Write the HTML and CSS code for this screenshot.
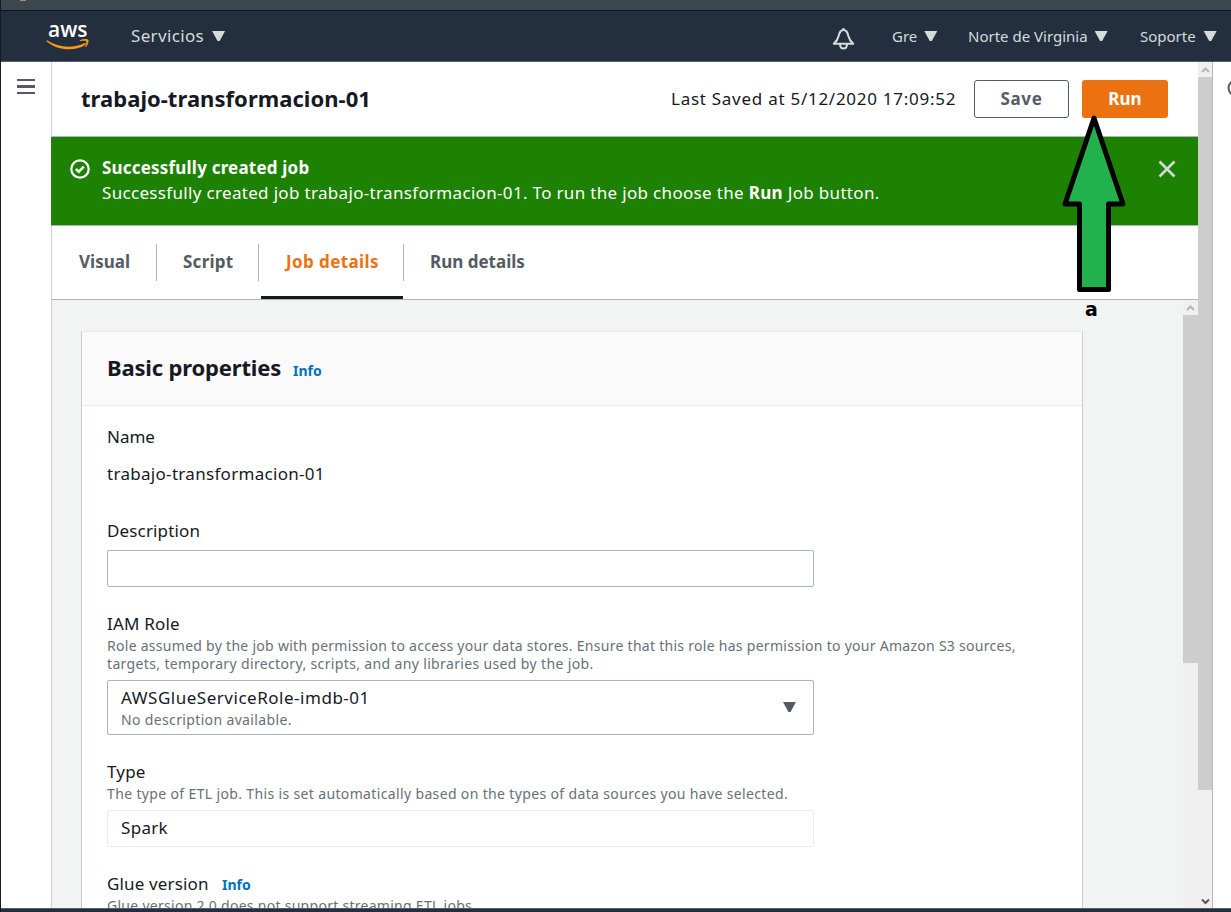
FILE: index.html
```html
<!DOCTYPE html>
<html lang="es">
<head>
<meta charset="utf-8">
<title>trabajo-transformacion-01</title>
<link rel="stylesheet" href="styles.css">
</head>
<body>
<div class="window">
  <div class="browser-strip"><span class="tab-icon"></span></div>
  <nav class="topnav">
    <div class="brand">
      <span class="brand-name">aws</span>
      <svg class="smile" width="44" height="15" viewBox="0 0 44 15"><path d="M1 3.2C12 10.8 27 11.6 38.5 6.2c1.300-.600 2 .700.800 1.700C29 14.300 12 14 1 4.700.300 4 .500 3 1 3.200z" fill="#f79a1e"/><path d="M34 3.300c2.500-1.500 7.500-1.500 8.300-.500.800 1.100-.300 5.500-2.400 7.200-.600.400-.900.100-.600-.500.800-1.800 1.500-4.300 1-5.100-.600-.800-4.100-.600-5.900-.400-.600.100-.800-.400-.400-.700z" fill="#f79a1e"/></svg>
    </div>
    <div class="menu services"><span>Servicios</span><i class="caret"></i></div>
    <svg class="bell" width="23" height="23" viewBox="0 0 23 23" fill="none" stroke="#d5dbdb" stroke-width="2" stroke-linejoin="round"><path d="M1.800 16.800C5.500 13.500 6 12 6.800 8.500C7.500 5 9 3 11.500 3s4 2 4.700 5.500c.8 3.500 1.300 5 5 8.300z"/><path d="M11.500 1v2M8 17c0 6 7 6 7 0"/></svg>
    <div class="menu account"><span>Gre</span><i class="caret"></i></div>
    <div class="menu region"><span>Norte de Virginia</span><i class="caret"></i></div>
    <div class="menu support"><span>Soporte</span><i class="caret"></i></div>
  </nav>
  <div class="workspace">
    <aside class="rail"><span class="bars"><i></i><i></i><i></i></span></aside>
    <main class="main">
      <header class="job-header">
        <h1>trabajo-transformacion-01</h1>
        <span class="saved">Last Saved at 5/12/2020 17:09:52</span>
        <button class="btn save">Save</button>
        <button class="btn run">Run</button>
      </header>
      <section class="flash">
        <svg class="check" width="20" height="20" viewBox="0 0 20 20" fill="none" stroke="#fff" stroke-width="2.200"><circle cx="10" cy="10" r="8.700"/><path d="M5.800 10l3 2.700 5-5" stroke-width="2.500"/></svg>
        <div class="flash-text">
          <strong class="flash-title">Successfully created job</strong>
          <span class="flash-body">Successfully created job trabajo-transformacion-01. To run the job choose the <b>Run</b> Job button.</span>
        </div>
        <svg class="close" width="18" height="18" viewBox="0 0 18 18" stroke="#d5dbdb" stroke-width="2.500"><path d="M1.500 1.500l15 15M16.500 1.500l-15 15"/></svg>
      </section>
      <div class="tabs">
        <span class="tab visual">Visual</span>
        <span class="tab script">Script</span>
        <span class="tab details">Job details</span>
        <span class="tab runs">Run details</span>
      </div>
      <div class="body">
        <div class="canvas">
          <section class="card">
            <div class="card-head"><h2>Basic properties</h2><a class="info">Info</a></div>
            <div class="card-body">
              <div class="label">Name</div>
              <div class="label value">trabajo-transformacion-01</div>
              <div class="label desc">Description</div>
              <div class="input"></div>
              <div class="label iam">IAM Role</div>
              <div class="hint first role-hint">Role assumed by the job with permission to access your data stores. Ensure that this role has permission to your Amazon S3 sources,</div>
              <div class="hint">targets, temporary directory, scripts, and any libraries used by the job.</div>
              <div class="select">
                <div class="select-text"><span class="label role">AWSGlueServiceRole-imdb-01</span><span class="hint first">No description available.</span></div>
                <i class="caret dark"></i>
              </div>
              <div class="label type">Type</div>
              <div class="hint first">The type of ETL job. This is set automatically based on the types of data sources you have selected.</div>
              <div class="input readonly"><span class="label spark">Spark</span></div>
              <div class="glue"><span class="label glue-label">Glue version</span><a class="info">Info</a></div>
              <div class="hint first glue-hint">Glue version 2.0 does not support streaming ETL jobs.</div>
            </div>
          </section>
        </div>
        <div class="scroll inner"><div class="thumb"><svg width="9" height="6" viewBox="0 0 9 6"><path d="M1 5l3.500-3.500L8 5" fill="none" stroke="#b5b5b5" stroke-width="2"/></svg></div></div>
      </div>
    </main>
    <div class="scroll outer"><div class="thumb"><svg width="9" height="6" viewBox="0 0 9 6"><path d="M1 5l3.500-3.500L8 5" fill="none" stroke="#b5b5b5" stroke-width="2"/></svg></div><svg class="down" width="9" height="7" viewBox="0 0 9 7"><path d="M1 1.500L4.500 5 8 1.500" fill="none" stroke="#555" stroke-width="2"/></svg></div>
    <aside class="edge"><svg width="4" height="18" viewBox="0 0 4 18"><circle cx="9" cy="9" r="7.500" fill="none" stroke="#545b64" stroke-width="2"/></svg></aside>
  </div>
  <div class="footer"></div>
</div>
<svg class="arrow" width="70" height="180" viewBox="0 0 70 180"><path d="M34 3L63 89H48.500v85.500H19.500V89H5z" fill="#22b14c" stroke="#000" stroke-width="5" stroke-linejoin="round"/></svg>
<span class="mark">a</span>
</body>
</html>
```
FILE: styles.css
```css
* { box-sizing: border-box; }
body { margin: 0; font-family: "Noto Sans", sans-serif; color: #16191f; overflow: hidden; white-space: nowrap; }
h1, h2 { margin: 0; font-weight: 700; }
.window { width: 1231px; height: 912px; display: flex; flex-direction: column; border-left: 1px solid #16191f; background: #fff; }
.browser-strip { flex: none; height: 11px; background: #3a474f; border-bottom: 1px solid #111418; }
.tab-icon { display: block; width: 6px; height: 1px; margin-left: 19px; background: #b98272; }
.topnav { flex: none; height: 51px; background: #232f3e; border-bottom: 1px solid #545b6a; display: flex; align-items: center; color: #d5dbdb; padding-left: 45px; }
.brand { width: 85px; height: 50px; display: flex; flex-direction: column; padding-top: 6px; }
.brand-name { font: 600 21px/24px "Open Sans", sans-serif; color: #fff; padding-left: 2px; }
.smile { margin-top: -4px; }
.menu { display: flex; align-items: center; font-size: 15px; line-height: 20px; }
.services { font-size: 17px; width: 701px; gap: 8px; letter-spacing: 0.35px; }
.caret { width: 13px; height: 10px; background: #d5dbdb; clip-path: polygon(0 0, 100% 0, 58% 100%, 42% 100%); }
.bell { margin-top: 5px; }
.account { margin-left: 37px; gap: 7px; width: 76px; }
.region { gap: 7px; width: 172px; }
.support { gap: 8px; }
.workspace { flex: 1; min-height: 0; display: flex; }
.rail { width: 51px; border-right: 1px solid #d0d3d5; padding: 17px 0 0 16px; }
.bars { display: flex; flex-direction: column; gap: 4px; width: 18px; }
.bars i { height: 2.400px; background: #545b64; }
.main { width: 1146px; display: flex; flex-direction: column; }
.job-header { flex: none; height: 75px; border-bottom: 1px solid #aab7b8; display: flex; align-items: center; padding-left: 29px; }
h1 { font-size: 22px; line-height: 30px; width: 590px; margin-top: -2px; letter-spacing: 0.04px; }
.saved { font-size: 17px; line-height: 24px; width: 303px; letter-spacing: 0.73px; }
.btn { height: 38px; border-radius: 3px; font: 700 17px/24px "Noto Sans", sans-serif; padding: 0; }
.save { width: 95px; border: 1px solid #545b64; background: #fff; color: #545b64; margin-right: 13px; letter-spacing: 0.7px; }
.run { width: 86px; border: 0; background: #ec7211; color: #fff; }
.flash { flex: none; height: 89px; margin-left: -1px; background: #1d8102; border-bottom: 1px solid #aab7b8; color: #fff; display: flex; padding: 18px 0 0 19px; }
.check { margin: 4px 12px 0 0; }
.flash-text { width: 1056px; display: flex; flex-direction: column; font-size: 17px; line-height: 25px; }
.flash-title { letter-spacing: 0.2px; }
.flash-body { letter-spacing: 0.325px; }
.close { margin-top: 5px; }
.tabs { flex: none; height: 74px; border-bottom: 1px solid #aab7b8; display: flex; font-weight: 700; font-size: 17px; line-height: 24px; color: #545b64; }
.tab { height: 37px; margin-top: 18px; padding-top: 6px; border-right: 1px solid #aab7b8; }
.visual { width: 105px; padding-left: 27px; }
.script { width: 102px; padding-left: 26px; letter-spacing: 0.25px; }
.details { width: 145px; padding-left: 27px; color: #ec7211; position: relative; letter-spacing: 0.4px; }
.details::after { content: ""; position: absolute; left: 2px; right: 0; bottom: -18px; height: 3px; background: #16191f; }
.runs { padding-left: 26px; border: 0; }
.body { flex: 1; min-height: 0; display: flex; background: #f2f3f3; }
.canvas { width: 1131px; padding: 31px 0 0 29px; overflow: hidden; }
.card { width: 1002px; height: 620px; background: #fff; border: 1px solid #c9cdd0; border-top-color: #eaeded; }
.card-head { height: 74px; background: #fafafa; border-bottom: 1px solid #eaeded; display: flex; padding: 20px 0 0 25px; }
h2 { font-size: 22px; line-height: 30px; width: 186px; letter-spacing: -0.17px; }
.info { font-size: 14px; line-height: 20px; font-weight: 700; color: #0073bb; }
.card-head .info { margin-top: 9px; }
.card-body { padding: 19px 0 0 25px; }
.label { font-size: 17px; line-height: 24px; display: block; }
.value { margin-top: 13px; letter-spacing: 0.3px; }
.desc { margin-top: 33px; letter-spacing: 0.15px; }
.input { width: 707px; height: 37px; border: 1px solid #aab7b8; border-radius: 2px; margin-top: 7px; padding: 5px 13px; }
.iam { margin-top: 25px; letter-spacing: 0.2px; }
.hint { font-size: 14px; line-height: 18px; color: #687078; display: block; letter-spacing: 0.355px; }
.first { margin-top: 1px; }
.role-hint, .glue-hint { letter-spacing: 0.28px; }
.select { width: 707px; height: 55px; border: 1px solid #aab7b8; border-radius: 2px; margin-top: 7px; display: flex; padding: 5px 0 0 13px; }
.select-text { width: 662px; }
.role { letter-spacing: 0.52px; }
.dark { background: #545b64; margin-top: 16px; }
.type { margin-top: 25px; letter-spacing: 0.2px; }
.readonly { border-color: #eaeded; }
.spark { letter-spacing: 0.3px; }
.glue { display: flex; margin-top: 25px; }
.glue-label { width: 115px; letter-spacing: 0.15px; }
.glue .info { margin-top: 3px; }
.scroll { width: 15px; background: #f0f0f0; flex: none; }
.thumb { background: #cdcdcd; border-top: 15px solid #f0f0f0; position: relative; }
.thumb svg { position: absolute; left: 3px; top: -10px; }
.inner .thumb { height: 363px; }
.outer { display: flex; flex-direction: column; justify-content: space-between; align-items: center; border-right: 1px solid #b8b8b8; padding-bottom: 3px; }
.outer .thumb { height: 728px; width: 14px; }
.edge { flex: 1; padding-top: 17px; display: flex; justify-content: flex-end; }
.footer { flex: none; height: 4px; background: #232f3e; border-top: 1px solid #545b6a; }
.arrow { position: absolute; left: 1060px; top: 115px; }
.mark { position: absolute; left: 1085px; top: 297px; font: 700 19px/24px "DejaVu Sans", sans-serif; color: #000; }
```
